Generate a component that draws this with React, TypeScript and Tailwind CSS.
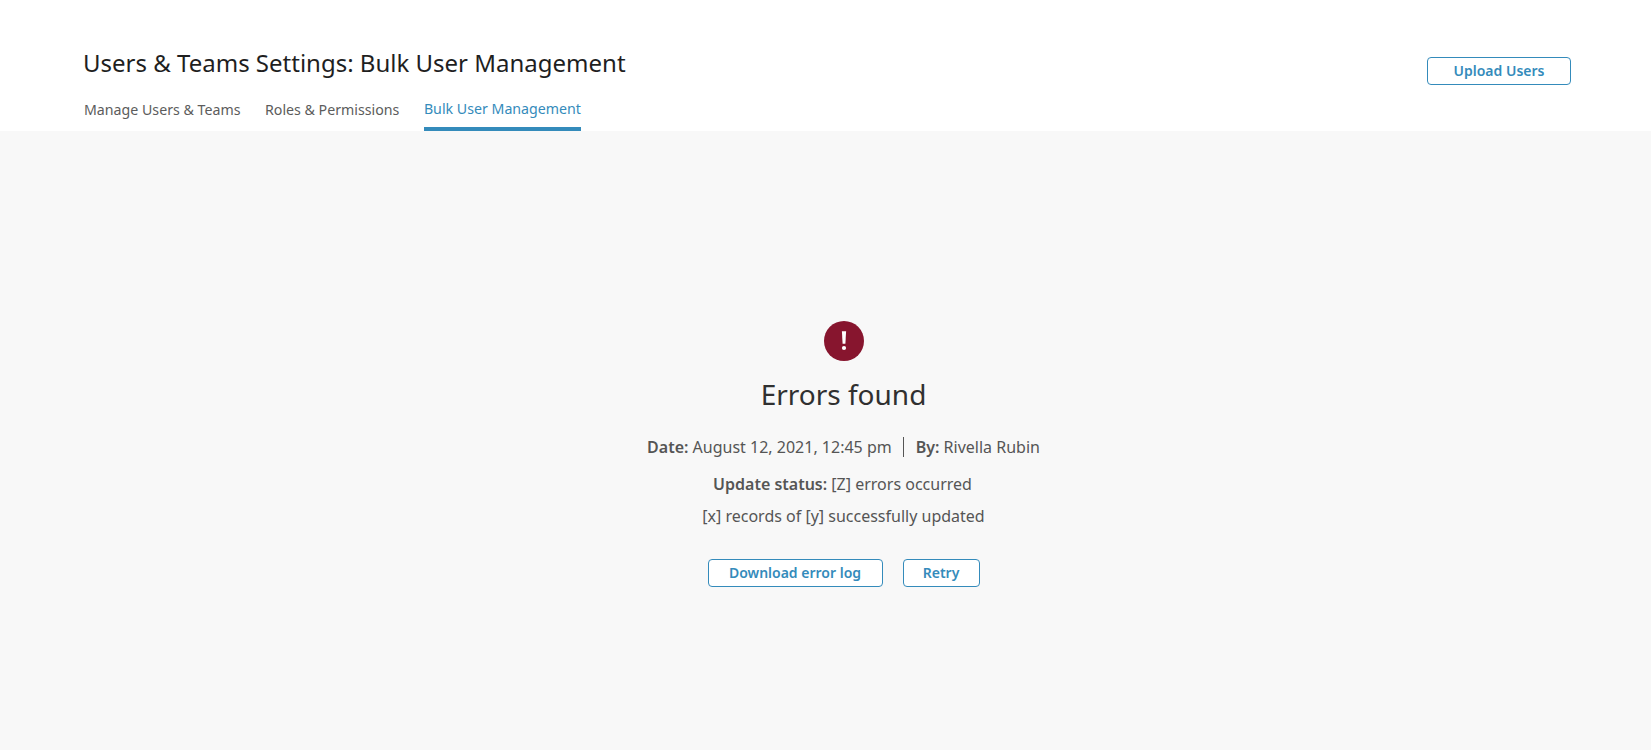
import { ReactNode } from "react";

function OutlineButton({ children, className }: { children: ReactNode; className: string }) {
  return (
    <button
      type="button"
      className={`flex h-[28px] items-center justify-center rounded-[4px] border border-[#348bbb] bg-white pb-[1px] text-[14px] font-semibold text-[#348bbb] ${className}`}
    >
      {children}
    </button>
  );
}

export default function App() {
  return (
    <div className="flex h-[750px] flex-col overflow-hidden bg-[#f8f8f8] font-['Noto_Sans',sans-serif]">
      <header className="flex h-[131px] shrink-0 items-start justify-between bg-white pl-[83px] pr-[80px]">
        <div>
          <h1 className="mt-[46px] text-[24px] leading-[34px] text-[#1f1f1f]">
            Users &amp; Teams Settings: Bulk User Management
          </h1>
          <nav className="mt-[19px] flex gap-[24.5px] text-[14.2px] leading-[20px]">
            <a className="pl-[1px] pt-[1px] text-[#5c5c5c]">Manage Users &amp; Teams</a>
            <a className="pt-[1px] text-[#5c5c5c]">Roles &amp; Permissions</a>
            <a className="h-[32px] border-b-[4px] border-[#348bbb] text-[#348bbb]">Bulk User Management</a>
          </nav>
        </div>
        <OutlineButton className="mt-[57px] w-[144px]">Upload Users</OutlineButton>
      </header>

      <main className="flex flex-col items-center pl-[36px] pt-[190px] text-[16px] text-[#555555]">
        <div className="flex h-[40px] w-[40px] items-center justify-center rounded-full bg-[#87152e]">
          <svg width="6" height="22" viewBox="0 0 6 22" fill="#fff">
            <path d="M.9 1.2h4.2l-.7 12.6H1.6z" />
            <circle cx="3" cy="18" r="2.1" />
          </svg>
        </div>
        <h2 className="mt-[14px] text-[28px] leading-[38px] text-[#303030]">Errors found</h2>
        <div className="mt-[22px] flex h-[24px] items-center leading-[24px]">
          <span>
            <b className="font-semibold">Date:</b> August 12, 2021, 12:45 pm
          </span>
          <span className="ml-[11px] mr-[12px] h-[20px] w-[1px] bg-[#555555]" />
          <span>
            <b className="font-semibold">By:</b> Rivella Rubin
          </span>
        </div>
        <p className="mr-[2px] mt-[13px] leading-[24px]">
          <b className="font-semibold">Update status:</b> [Z] errors occurred
        </p>
        <p className="mt-[8px] leading-[24px]">[x] records of [y] successfully updated</p>
        <div className="mt-[31px] flex gap-[20px]">
          <OutlineButton className="w-[175px]">Download error log</OutlineButton>
          <OutlineButton className="w-[77px]">Retry</OutlineButton>
        </div>
      </main>
    </div>
  );
}
